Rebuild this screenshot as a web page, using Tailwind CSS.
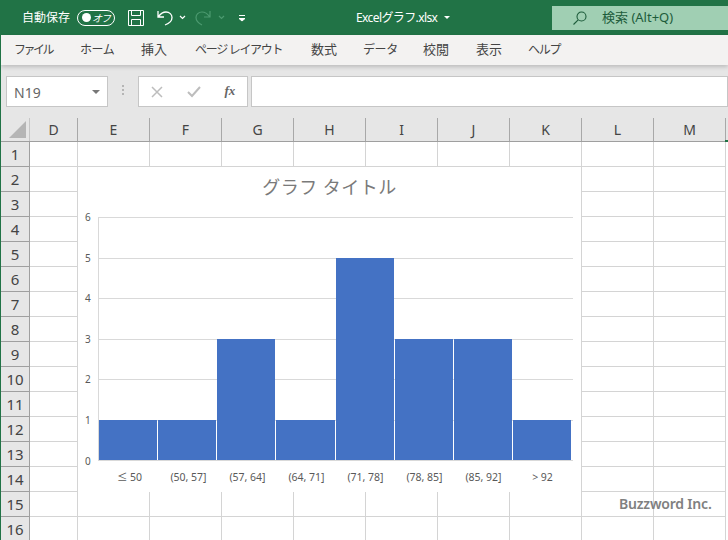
<!DOCTYPE html>
<html lang="ja">
<head>
<meta charset="utf-8">
<script src="https://cdn.jsdelivr.net/npm/@tailwindcss/browser@4"></script>
</head>
<body class="w-[728px] h-[540px] overflow-hidden bg-white font-['Noto_Sans','Noto_Sans_CJK_JP',sans-serif]">
<div class="flex flex-col w-[728px] h-[540px] overflow-hidden border-l border-[#217346]">
  <!-- title bar -->
  <header class="relative flex items-center h-[35px] shrink-0 bg-[#217346] text-white">
    <span class="ml-[21px] w-[56px] text-[12px] whitespace-nowrap">自動保存</span>
    <div class="flex items-center justify-between w-[38px] h-[16px] pl-[4px] pr-[3px] ml-[-1px] rounded-full border border-white">
      <span class="w-[9px] h-[9px] rounded-full bg-white"></span>
      <span class="text-[10px] leading-none italic tracking-[-1px] pr-[1px]">オフ</span>
    </div>
    <svg class="ml-[13px] w-[16px] h-[16px]" viewBox="0 0 16 16" fill="none" stroke="#fff" stroke-width="1"><path d="M.5.5h15v15H.5zM3.500.5v5h9v-5M3.500 15.500v-6h9v6"/></svg>
    <svg class="ml-[13px] w-[16px] h-[16px]" viewBox="0 0 16 16" fill="none" stroke="#fff" stroke-width="1.300"><path d="M1 1v6h6M1.500 6.500C4 3 6.500 2 9 2c3.500 0 6 2.500 6 5.500 0 3.500-3 6-7 7.500"/></svg>
    <svg class="ml-[6px] w-[7px] h-[5px]" viewBox="0 0 7 5" fill="none" stroke="#fff" stroke-width="1.200"><path d="M1 1l2.500 2.500L6 1"/></svg>
    <svg class="ml-[9px] w-[16px] h-[16px]" viewBox="0 0 16 16" fill="none" stroke="#4c9a70" stroke-width="1.200"><path d="M15 1v6H9M14.500 6.500C12 3 9 2 7 2 3.500 2 1 4.500 1 7.500c0 3.500 3 6 6 7.500"/></svg>
    <svg class="ml-[7px] w-[7px] h-[5px]" viewBox="0 0 7 5" fill="none" stroke="#4c9a70" stroke-width="1.200"><path d="M1 1l2.500 2.500L6 1"/></svg>
    <svg class="ml-[13px] w-[8px] h-[8px]" viewBox="0 0 8 8" fill="none" stroke="#fff" stroke-width="1"><path d="M1 1.500h6"/><path d="M1 4.500l3 2.500 3-2.500z" fill="#fff"/></svg>
    <div class="absolute left-[355px] top-0 h-[35px] flex items-center gap-[7px]">
      <span class="text-[12px] tracking-[-0.6px] whitespace-nowrap">Excelグラフ.xlsx</span>
      <span class="w-0 h-0 border-x-[3px] border-x-transparent border-t-[3px] border-t-white"></span>
    </div>
    <div class="absolute left-[551px] top-[6px] w-[176px] h-[24px] flex items-center bg-[#a0cfb3] text-[#1d5c3b]">
      <svg class="ml-[20px] w-[16px] h-[16px]" viewBox="0 0 16 16" fill="none" stroke="#1d5c3b" stroke-width="1.100"><circle cx="9.500" cy="6.500" r="4.500"/><path d="M6.200 9.800L1.500 14.500"/></svg>
      <span class="ml-[14px] text-[13px] whitespace-nowrap">検索 (Alt+Q)</span>
    </div>
  </header>
  <!-- ribbon tabs -->
  <nav class="flex items-center h-[30px] shrink-0 bg-[#f3f2f1] text-[#444] text-[13px] whitespace-nowrap shadow-[0_2px_4px_rgba(0,0,0,0.18)] z-10">
    <span class="ml-[13px] w-[66px] text-[12px] tracking-[-2.500px]">ファイル</span>
    <span class="w-[61px] text-[12px] tracking-[-0.4px]">ホーム</span>
    <span class="w-[54px]">挿入</span>
    <span class="w-[116px] text-[12px] tracking-[-1.300px]">ページ レイアウト</span>
    <span class="w-[52px]">数式</span>
    <span class="w-[60px] text-[12px] tracking-[-0.4px]">データ</span>
    <span class="w-[53px]">校閲</span>
    <span class="w-[52px]">表示</span>
    <span class="text-[12px] tracking-[-1.300px]">ヘルプ</span>
  </nav>
  <!-- formula bar -->
  <div class="flex items-start h-[53px] shrink-0 bg-[#e6e6e6] pt-[11px]">
    <div class="flex items-center justify-between w-[103px] h-[31px] ml-[5px] pl-[7px] pr-[7px] bg-white border border-[#c6c6c6] text-[14px] text-[#666]">
      <span class="pt-[1px]">N19</span>
      <span class="w-0 h-0 border-x-[4px] border-x-transparent border-t-[4px] border-t-[#777]"></span>
    </div>
    <div class="flex flex-col gap-[2px] ml-[14px] mt-[9px] w-[2px]">
      <span class="w-[2px] h-[2px] bg-[#b5b5b5]"></span>
      <span class="w-[2px] h-[2px] bg-[#b5b5b5]"></span>
      <span class="w-[2px] h-[2px] bg-[#b5b5b5]"></span>
    </div>
    <div class="flex items-center w-[110px] h-[31px] ml-[14px] bg-white border border-[#c6c6c6]">
      <svg class="ml-[12px] w-[12px] h-[12px]" viewBox="0 0 12 12" fill="none" stroke="#bdbdbd" stroke-width="1.500"><path d="M1 1l10 10M11 1L1 11"/></svg>
      <svg class="ml-[24px] w-[14px] h-[12px]" viewBox="0 0 14 12" fill="none" stroke="#bdbdbd" stroke-width="2"><path d="M1 6l4 4 8-9"/></svg>
      <span class="ml-[23px] mb-[2px] text-[13px] leading-none font-bold italic text-[#666] font-['Liberation_Serif',serif]">fx</span>
    </div>
    <div class="w-[480px] h-[31px] ml-[3px] bg-white border border-[#c6c6c6]"></div>
  </div>
  <!-- column headers -->
  <div class="relative flex h-[24px] shrink-0 bg-[#e6e6e6] border-b border-[#9f9f9f] text-[14px] text-[#444] text-center leading-[24px]">
    <div class="relative w-[29px] shrink-0 border-r border-[#c6c6c6]">
      <span class="absolute right-[3px] bottom-[3px] w-0 h-0 border-l-[17px] border-l-transparent border-b-[17px] border-b-[#b5b5b5]"></span>
    </div>
    <div class="w-[48px] border-r border-[#a8a8a8]">D</div>
    <div class="w-[72px] border-r border-[#a8a8a8]">E</div>
    <div class="w-[72px] border-r border-[#a8a8a8]">F</div>
    <div class="w-[72px] border-r border-[#a8a8a8]">G</div>
    <div class="w-[72px] border-r border-[#a8a8a8]">H</div>
    <div class="w-[72px] border-r border-[#a8a8a8]">I</div>
    <div class="w-[72px] border-r border-[#a8a8a8]">J</div>
    <div class="w-[72px] border-r border-[#a8a8a8]">K</div>
    <div class="w-[72px] border-r border-[#a8a8a8]">L</div>
    <div class="w-[72px] border-r border-[#a8a8a8]">M</div>
    <span class="absolute right-0 bottom-[-1px] w-[3px] h-[2px] bg-[#217346]"></span>
  </div>
  <!-- sheet -->
  <div class="relative flex flex-1 min-h-0">
    <div class="w-[29px] shrink-0 grid auto-rows-[25px] bg-[#e6e6e6] border-r border-[#9f9f9f] text-[15px] text-[#444] text-center leading-[25px] [&>div]:border-b [&>div]:border-[#9f9f9f]">
      <div>1</div><div>2</div><div>3</div><div>4</div><div>5</div><div>6</div><div>7</div><div>8</div><div>9</div><div>10</div><div>11</div><div>12</div><div>13</div><div>14</div><div>15</div><div>16</div>
    </div>
    <div class="grid grid-cols-[48px_repeat(9,72px)] auto-rows-[25px] [&>div]:border-r [&>div]:border-b [&>div]:border-[#d4d4d4]">
      <div></div><div></div><div></div><div></div><div></div><div></div><div></div><div></div><div></div><div></div>
      <div></div><div></div><div></div><div></div><div></div><div></div><div></div><div></div><div></div><div></div>
      <div></div><div></div><div></div><div></div><div></div><div></div><div></div><div></div><div></div><div></div>
      <div></div><div></div><div></div><div></div><div></div><div></div><div></div><div></div><div></div><div></div>
      <div></div><div></div><div></div><div></div><div></div><div></div><div></div><div></div><div></div><div></div>
      <div></div><div></div><div></div><div></div><div></div><div></div><div></div><div></div><div></div><div></div>
      <div></div><div></div><div></div><div></div><div></div><div></div><div></div><div></div><div></div><div></div>
      <div></div><div></div><div></div><div></div><div></div><div></div><div></div><div></div><div></div><div></div>
      <div></div><div></div><div></div><div></div><div></div><div></div><div></div><div></div><div></div><div></div>
      <div></div><div></div><div></div><div></div><div></div><div></div><div></div><div></div><div></div><div></div>
      <div></div><div></div><div></div><div></div><div></div><div></div><div></div><div></div><div></div><div></div>
      <div></div><div></div><div></div><div></div><div></div><div></div><div></div><div></div><div></div><div></div>
      <div></div><div></div><div></div><div></div><div></div><div></div><div></div><div></div><div></div><div></div>
      <div></div><div></div><div></div><div></div><div></div><div></div><div></div><div></div><div></div><div></div>
      <div></div><div></div><div></div><div></div><div></div><div></div><div></div><div></div><div></div><div></div>
      <div></div><div></div><div></div><div></div><div></div><div></div><div></div><div></div><div></div><div></div>
    </div>
    <!-- chart floating over the sheet -->
    <section class="absolute left-[77px] top-[25px] w-[503px] h-[325px] bg-white text-[#595959]">
      <h2 class="text-center text-[18px] leading-[24px] mt-[8px] tracking-[0.5px] font-normal text-[#7a7a7a]">グラフ タイトル</h2>
      <div class="absolute left-[20px] top-[50px] w-[475px] h-[244px] border-l border-[#d9d9d9] flex flex-col justify-between">
        <div class="relative h-px bg-[#d9d9d9]"><span class="absolute left-[-14px] top-[-6px] text-[10px] leading-[12px]">6</span></div>
        <div class="relative h-px bg-[#d9d9d9]"><span class="absolute left-[-14px] top-[-6px] text-[10px] leading-[12px]">5</span></div>
        <div class="relative h-px bg-[#d9d9d9]"><span class="absolute left-[-14px] top-[-6px] text-[10px] leading-[12px]">4</span></div>
        <div class="relative h-px bg-[#d9d9d9]"><span class="absolute left-[-14px] top-[-6px] text-[10px] leading-[12px]">3</span></div>
        <div class="relative h-px bg-[#d9d9d9]"><span class="absolute left-[-14px] top-[-6px] text-[10px] leading-[12px]">2</span></div>
        <div class="relative h-px bg-[#d9d9d9]"><span class="absolute left-[-14px] top-[-6px] text-[10px] leading-[12px]">1</span></div>
        <div class="relative h-px bg-[#d9d9d9]"><span class="absolute left-[-14px] top-[-5px] text-[10px] leading-[12px]">0</span></div>
      </div>
      <div class="absolute left-[21px] top-[50px] h-[243px] flex items-end gap-px">
        <div class="w-[58px] h-[40px] bg-[#4472c4]"></div>
        <div class="w-[58px] h-[40px] bg-[#4472c4]"></div>
        <div class="w-[58px] h-[121px] bg-[#4472c4]"></div>
        <div class="w-[59px] h-[40px] bg-[#4472c4]"></div>
        <div class="w-[58px] h-[202px] bg-[#4472c4]"></div>
        <div class="w-[58px] h-[121px] bg-[#4472c4]"></div>
        <div class="w-[58px] h-[121px] bg-[#4472c4]"></div>
        <div class="w-[58px] h-[40px] bg-[#4472c4]"></div>
      </div>
      <div class="absolute left-[22px] top-[303px] flex text-[10.500px] leading-[14px] text-center whitespace-nowrap">
        <span class="w-[59px]">≤ 50</span>
        <span class="w-[59px]">(50, 57]</span>
        <span class="w-[59px]">(57, 64]</span>
        <span class="w-[59px]">(64, 71]</span>
        <span class="w-[59px]">(71, 78]</span>
        <span class="w-[59px]">(78, 85]</span>
        <span class="w-[59px]">(85, 92]</span>
        <span class="w-[59px]">&gt; 92</span>
      </div>
    </section>
    <span class="absolute left-[618px] top-[352px] text-[14px] leading-[20px] tracking-[-0.2px] font-semibold text-[#808080] whitespace-nowrap">Buzzword Inc.</span>
  </div>
</div>
</body>
</html>
